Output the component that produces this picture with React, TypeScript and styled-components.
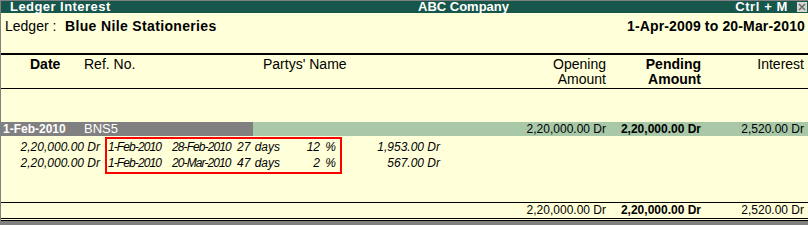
import React from 'react'
import styled, { createGlobalStyle } from 'styled-components'

const GlobalStyle = createGlobalStyle`
  html, body {
    margin: 0;
    padding: 0;
    background: #808080;
  }
  body {
    font-family: 'Liberation Sans', Arial, sans-serif;
    color: #000;
  }
  #root {
    padding: 1px 0 0 1px;
  }
`

const colors = {
  paper: '#ffffd9',
  title: '#17574b',
  grey: '#808080',
  sage: '#a8c8a8',
  red: '#ff0000',
}

const COLUMNS = '83px 169px 1fr 98px 95px 103px'

const Frame = styled.div`
  width: 807px;
  height: 220px;
  background: ${colors.paper};
  display: flex;
  flex-direction: column;
`

const TitleBar = styled.div`
  height: 12px;
  background: ${colors.title};
  color: #fff;
  display: grid;
  grid-template-columns: 417px 1fr auto auto;
  align-items: center;
  font-size: 13px;
  font-weight: bold;
  line-height: 12px;
  padding-right: 1px;
`

const TitleText = styled.span<{ $spacing?: number; $indent?: number }>`
  padding-left: ${p => p.$indent ?? 0}px;
  letter-spacing: ${p => p.$spacing ?? 0}px;
  white-space: nowrap;
`

const CloseBox = styled.div`
  width: 10px;
  height: 10px;
  margin-left: 9px;
  background: #d8d8d0;
  display: flex;
  align-items: center;
  justify-content: center;
`

const LedgerInfo = styled.div`
  height: 42px;
  box-sizing: border-box;
  padding: 4px 3px 0 4px;
  display: flex;
  align-items: flex-start;
  font-size: 14px;
  line-height: 18px;
  border-bottom: 2px solid #000;
`

const LedgerLabel = styled.span`
  width: 60px;
`

const Strong = styled.span<{ $spacing?: number }>`
  font-weight: bold;
  letter-spacing: ${p => p.$spacing ?? 0}px;
`

const Period = styled(Strong)`
  margin-left: auto;
`

const HeaderRow = styled.div`
  height: 34px;
  box-sizing: border-box;
  padding: 2px 4px 0 0;
  display: grid;
  grid-template-columns: ${COLUMNS};
  font-size: 14px;
  line-height: 15px;
  border-bottom: 1px solid #000;
`

const HeadCell = styled.div<{ $align?: 'left' | 'right'; $indent?: number; $bold?: boolean }>`
  text-align: ${p => p.$align ?? 'left'};
  padding-left: ${p => p.$indent ?? 0}px;
  font-weight: ${p => (p.$bold ? 'bold' : 'normal')};
`

const Body = styled.div`
  flex: 1;
  padding-top: 33px;
`

const BillRow = styled.div`
  display: grid;
  grid-template-columns: ${COLUMNS};
  height: 14px;
  font-size: 12px;
  line-height: 14px;
  background: ${colors.sage};
  padding-right: 4px;
`

const BillCell = styled.div<{ $shaded?: boolean; $align?: 'left' | 'right'; $bold?: boolean; $size?: number; $indent?: number }>`
  background: ${p => (p.$shaded ? colors.grey : 'transparent')};
  color: ${p => (p.$shaded ? '#fff' : '#000')};
  text-align: ${p => p.$align ?? 'left'};
  font-weight: ${p => (p.$bold ? 'bold' : 'normal')};
  font-size: ${p => p.$size ?? 12}px;
  padding-left: ${p => p.$indent ?? 0}px;
  white-space: nowrap;
`

const Breakup = styled.div`
  display: flex;
  margin-top: 1px;
  font-size: 12px;
  font-style: italic;
  line-height: 16px;
`

const AmountColumn = styled.div<{ $width: number; $pad?: number }>`
  width: ${p => p.$width}px;
  box-sizing: border-box;
  padding-top: 2px;
  padding-right: ${p => p.$pad ?? 0}px;
  text-align: right;
  white-space: nowrap;
`

const RateBox = styled.div`
  width: 237px;
  margin-left: 2px;
  box-sizing: border-box;
  border: 2px solid ${colors.red};
  padding: 0 4px 1px 1px;
`

const RateLine = styled.div`
  display: grid;
  grid-template-columns: 64px 65px 1fr auto;
  white-space: nowrap;
`

const RateDate = styled.span`
  letter-spacing: -0.9px;
`

const RateWords = styled.span<{ $gap: number }>`
  word-spacing: ${p => p.$gap}px;
`

const TotalsRow = styled.div`
  display: grid;
  grid-template-columns: ${COLUMNS};
  padding-right: 4px;
  height: 19px;
  box-sizing: border-box;
  font-size: 12px;
  line-height: 15px;
  border-top: 1px solid #000;
  border-bottom: 3px double #000;
`

const Value = styled.div<{ $bold?: boolean }>`
  text-align: right;
  font-weight: ${p => (p.$bold ? 'bold' : 'normal')};
  white-space: nowrap;
`

const breakups = [
  { amount: '2,20,000.00 Dr', from: '1-Feb-2010', to: '28-Feb-2010', days: '27 days', rate: '12 %', interest: '1,953.00 Dr' },
  { amount: '2,20,000.00 Dr', from: '1-Feb-2010', to: '20-Mar-2010', days: '47 days', rate: '2 %', interest: '567.00 Dr' },
]

export default function App() {
  return (
    <>
      <GlobalStyle />
      <Frame>
        <TitleBar>
          <TitleText $indent={9} $spacing={0.45}>Ledger Interest</TitleText>
          <TitleText>ABC Company</TitleText>
          <TitleText $spacing={0.6}>Ctrl + M</TitleText>
          <CloseBox>
            <svg width="8" height="8" viewBox="0 0 8 8">
              <path d="M1 1 L7 7 M7 1 L1 7" stroke="#6a6a6a" strokeWidth="1.6" />
            </svg>
          </CloseBox>
        </TitleBar>

        <LedgerInfo>
          <LedgerLabel>Ledger :</LedgerLabel>
          <Strong $spacing={0.35}>Blue Nile Stationeries</Strong>
          <Period $spacing={0.15}>1-Apr-2009 to 20-Mar-2010</Period>
        </LedgerInfo>

        <HeaderRow>
          <HeadCell $indent={29} $bold>Date</HeadCell>
          <HeadCell>Ref. No.</HeadCell>
          <HeadCell $indent={10}>Partys' Name</HeadCell>
          <HeadCell $align="right">Opening<br />Amount</HeadCell>
          <HeadCell $align="right" $bold>Pending<br />Amount</HeadCell>
          <HeadCell $align="right">Interest</HeadCell>
        </HeaderRow>

        <Body>
          <BillRow>
            <BillCell $shaded $bold $indent={2}>1-Feb-2010</BillCell>
            <BillCell $shaded $size={13}>BNS5</BillCell>
            <BillCell />
            <BillCell $align="right">2,20,000.00 Dr</BillCell>
            <BillCell $align="right" $bold>2,20,000.00 Dr</BillCell>
            <BillCell $align="right">2,520.00 Dr</BillCell>
          </BillRow>

          <Breakup>
            <AmountColumn $width={102} $pad={3}>
              {breakups.map((b, i) => <div key={i}>{b.amount}</div>)}
            </AmountColumn>
            <RateBox>
              {breakups.map((b, i) => (
                <RateLine key={i}>
                  <RateDate>{b.from}</RateDate>
                  <RateDate>{b.to}</RateDate>
                  <RateWords $gap={1}>{b.days}</RateWords>
                  <RateWords $gap={2}>{b.rate}</RateWords>
                </RateLine>
              ))}
            </RateBox>
            <AmountColumn $width={98}>
              {breakups.map((b, i) => <div key={i}>{b.interest}</div>)}
            </AmountColumn>
          </Breakup>
        </Body>

        <TotalsRow>
          <div />
          <div />
          <div />
          <Value>2,20,000.00 Dr</Value>
          <Value $bold>2,20,000.00 Dr</Value>
          <Value>2,520.00 Dr</Value>
        </TotalsRow>
      </Frame>
    </>
  )
}
